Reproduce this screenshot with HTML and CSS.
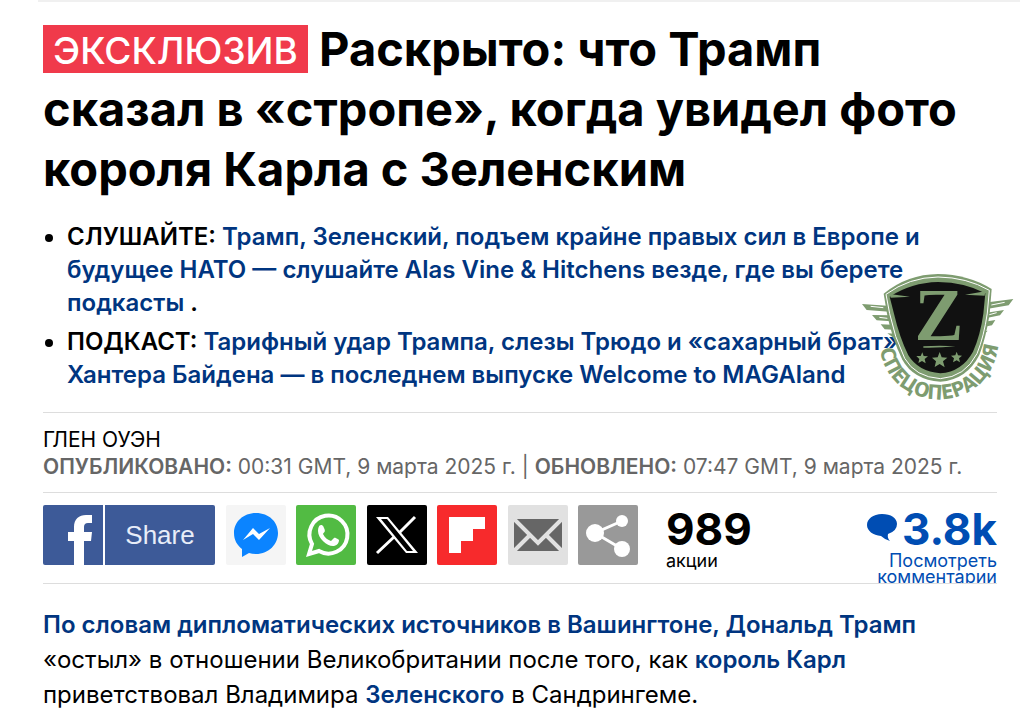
FILE: index.html
```
<!DOCTYPE html>
<html lang="ru">
<head>
  <meta charset="UTF-8">
  <meta name="viewport" content="width=device-width, initial-scale=1.0">
  <title>Раскрыто: что Трамп сказал в «стропе»</title>
  <link rel="stylesheet" href="styles.css">
</head>
<body>

  <article class="article">
    <h1><span class="badge">ЭКСКЛЮЗИВ</span> Раскрыто: что Трамп сказал в «стропе», когда увидел фото короля Карла с Зеленским</h1>

    <div class="highlights">
      <ul>
        <li>СЛУШАЙТЕ: <a href="#">Трамп, Зеленский, подъем крайне правых сил в Европе и будущее НАТО — слушайте Alas Vine &amp; Hitchens везде, где вы берете подкасты</a> .</li>
        <li>ПОДКАСТ: <a href="#">Тарифный удар Трампа, слезы Трюдо и «сахарный брат» Хантера Байдена — в последнем выпуске Welcome to MAGAland</a></li>
      </ul>

      <!-- emblem over the corner of the list -->
      <svg class="emblem" viewBox="0 0 510 435" role="img" aria-label="Спецоперация">
        <g fill="#7e9c70">
          <path d="M36 117L112 122L118 140L50 135ZM66 150L118 151L124 169L80 166ZM92 178L126 179L132 194L104 193ZM112 205L136 206L144 228Z"/>
          <path d="M490 102L414 112L410 132L476 121ZM462 135L410 143L406 160L450 151ZM436 165L404 170L400 186L426 181ZM413 197L398 200L389 222Z"/>
          <path d="M101 86Q172 28 264 27Q354 28 425 72L419 146Q408 218 388 270Q350 345 271 350Q190 344 157 284Q125 218 111 146Z"/>
        </g>
        <g stroke="#fff" stroke-width="3" fill="none">
          <path d="M62 124L100 128M88 157L112 160M464 112L424 120M440 143L418 149"/>
          <path d="M108 88Q178 37 264 36Q350 37 418 76L412 144Q402 214 381 266Q345 336 271 341Q196 336 164 280Q133 216 119 146Z"/>
        </g>
        <path fill="#111" d="M119 95Q184 53 264 51Q345 52 406 85L400 146Q391 211 369 260Q336 320 271 325Q205 320 175 271Q148 215 132 146Z"/>
        <path fill="#7e9c70" d="M119 87L180 95L122 98ZM406 79L345 89L404 92ZM220 244Q270 241 317 244Q270 249 220 248Z"/>
        <text class="emblem-z" x="267" y="226">Z</text>
        <path fill="#7e9c70" d="M217 262L221 273L234 274L224 282L227 295L216 288L205 294L208 282L199 273L212 273ZM269 261L275 277L292 278L279 289L284 307L269 297L254 306L258 289L246 278L263 277ZM320 260L324 271L336 272L327 280L330 292L320 286L309 292L312 280L303 272L316 271Z"/>
        <path id="arc" fill="none" d="M90 250C118 456 424 456 445 238"/>
        <text class="emblem-text"><textPath href="#arc" startOffset="50%">СПЕЦОПЕРАЦИЯ</textPath></text>
      </svg>
    </div>

    <div class="byline">
      <div class="author">ГЛЕН ОУЭН</div>
      <div class="dates"><b>ОПУБЛИКОВАНО:</b> 00:31 GMT, 9 марта 2025 г. | <b>ОБНОВЛЕНО:</b> 07:47 GMT, 9 марта 2025 г.</div>
    </div>

    <div class="share-bar">
      <div class="buttons">
        <button class="facebook" type="button">
          <svg viewBox="0 0 60 60" aria-hidden="true"><path fill="#fff" d="M31 60V36H25V27H31V22C31 14 36 10 43 10H49V18H45Q41 18 41 22V27H49L48 36H41V60Z"/></svg>
          <span>Share</span>
        </button>
        <button class="share messenger" type="button" aria-label="Messenger">
          <svg viewBox="0 0 60 60"><path fill="#0b84ff" d="M30 8C17 8 8 17 8 28C8 35 11 40 16 44V52L23 48Q26 49 30 49C43 49 52 39 52 28S43 8 30 8Z"/><path fill="#fff" d="M17 35L27 23L33 29L44 23L33 35L27 29Z"/></svg>
        </button>
        <button class="share whatsapp" type="button" aria-label="WhatsApp">
          <svg viewBox="0 0 60 60"><path fill="none" stroke="#fff" stroke-width="4" d="M13 49L16 39A19 19 0 1 1 23 46Z"/><path fill="#fff" d="M25 20C26 20 27 20 28 23C30 27 28 27 27 29C29 33 32 35 35 36L38 33C39 32 43 35 43 35C43 37 42 40 38 41C32 42 22 34 22 26C22 23 23 20 25 20Z"/></svg>
        </button>
        <button class="share twitter" type="button" aria-label="X">
          <svg viewBox="0 0 60 60"><path fill="#fff" fill-rule="evenodd" d="M9 12H21L51 48H39ZM14 14L40 46H46L20 14Z"/><path stroke="#fff" stroke-width="3" d="M48 12L32 28M27 32L10 48"/></svg>
        </button>
        <button class="share flipboard" type="button" aria-label="Flipboard">
          <svg viewBox="0 0 60 60"><path fill="#fff" d="M12 12H48V24H36V36H24V48H12Z"/></svg>
        </button>
        <button class="share email" type="button" aria-label="Email">
          <svg viewBox="0 0 60 60"><path fill="#666" d="M6 14H54V46H6Z"/><path fill="none" stroke="#e1e1e1" stroke-width="4" d="M5 13L30 38L55 13M5 47L22 30M55 47L38 30"/></svg>
        </button>
        <button class="share more" type="button" aria-label="Поделиться">
          <svg viewBox="0 0 60 60"><path fill="none" stroke="#fff" stroke-width="3" d="M44 16L17 28L44 44"/><g fill="#fff"><circle cx="17" cy="28" r="9"/><circle cx="44" cy="16" r="6"/><circle cx="44" cy="44" r="8"/></g></svg>
        </button>
      </div>
      <div class="count">
        <strong>989</strong>
        <span>акции</span>
      </div>
      <a class="comments" href="#">
        <strong>
          <svg viewBox="0 0 32 28" aria-hidden="true"><path fill="#004db3" d="M16 0C7 0 1 5 1 11S7 21 15 22Q18 25 24 27Q21 24 22 20Q31 17 31 10C31 4 25 0 16 0Z"/></svg>3.8k
        </strong>
        <span>Посмотреть комментарии</span>
      </a>
    </div>

    <p class="text"><a href="#">По словам дипломатических источников в Вашингтоне, Дональд Трамп</a> «остыл» в отношении Великобритании после того, как <a href="#">король Карл</a> приветствовал Владимира <a href="#">Зеленского</a> в Сандрингеме.</p>
  </article>

</body>
</html>
```
FILE: styles.css
```
* {
  box-sizing: border-box;
}
body {
  margin: 0;
  font-family: Inter, "Liberation Sans", sans-serif;
  background: #fff;
  color: #000;
}
.article {
  margin-left: 38px;
  padding: 17px 23px 0 5px;
  border-top: 2px solid #f0f0f0;
}
a {
  color: #003580;
  font-weight: 600;
  text-decoration: none;
}
h1 {
  margin: 0;
  padding-right: 24px;
  font-size: 47px;
  line-height: 60px;
  font-weight: 700;
}
.badge {
  display: inline-block;
  padding: 4px 10px 0;
  background: #f03a4b;
  color: #fff;
  font-size: 37px;
  line-height: 44px;
  font-weight: 500;
  vertical-align: 2px;
}
.highlights {
  position: relative;
  padding: 21px 0;
  border-bottom: 1px solid #ddd;
}
.highlights ul {
  margin: 0;
  padding-left: 24px;
  font-size: 24px;
  line-height: 33px;
  font-weight: 600;
}
.highlights li + li {
  margin-top: 6px;
}
.emblem {
  position: absolute;
  right: -23px;
  bottom: 2px;
  width: 170px;
  height: 145px;
}
.emblem-z {
  font-family: "Liberation Serif", serif;
  font-size: 220px;
  font-weight: 700;
  text-anchor: middle;
  fill: #7e9c70;
}
.emblem-text {
  font-family: "Liberation Sans Narrow", "DejaVu Sans Condensed", sans-serif;
  font-size: 60px;
  font-weight: 700;
  text-anchor: middle;
  fill: #7e9c70;
}
.byline {
  padding: 13px 0 12px;
  border-bottom: 1px solid #ddd;
  font-size: 21px;
  line-height: 27px;
}
.dates {
  color: #666;
}
.dates b {
  font-weight: 600;
}
.share-bar {
  display: flex;
  height: 91px;
  padding-top: 12px;
  border-bottom: 1px solid #ddd;
  overflow: hidden;
}
.buttons {
  display: flex;
  justify-content: space-between;
  width: 595px;
}
button {
  flex: none;
  height: 60px;
  padding: 0;
  border: 0;
  border-radius: 2px;
  font-family: inherit;
  cursor: pointer;
}
button svg {
  display: block;
  width: 60px;
  height: 60px;
}
.facebook {
  display: flex;
  align-items: center;
  width: 172px;
  background: #3d5a98;
  color: #e8edf8;
  font-family: "Liberation Sans", sans-serif;
  font-size: 26px;
}
.facebook span {
  flex: 1;
  border-left: 2px solid #fff;
  line-height: 60px;
}
.share {
  width: 60px;
}
.messenger {
  background: #f5f5f5;
}
.whatsapp {
  background: #52bb43;
}
.twitter {
  background: #000;
}
.flipboard {
  background: #f72a2c;
}
.email {
  background: #e1e1e1;
}
.more {
  background: #999;
}
.count {
  margin-left: 28px;
}
.count strong,
.comments strong {
  display: block;
  font-size: 44px;
  line-height: 48px;
}
.count span,
.comments span {
  display: block;
  font-size: 18px;
  line-height: 16px;
}
.comments {
  margin-left: auto;
  width: 140px;
  color: #004db3;
  text-align: right;
  font-weight: 400;
}
.comments svg {
  width: 32px;
  height: 28px;
  margin-right: 4px;
  vertical-align: 3px;
}
.text {
  margin: 23px 0 0;
  font-size: 24px;
  line-height: 35px;
}
```
